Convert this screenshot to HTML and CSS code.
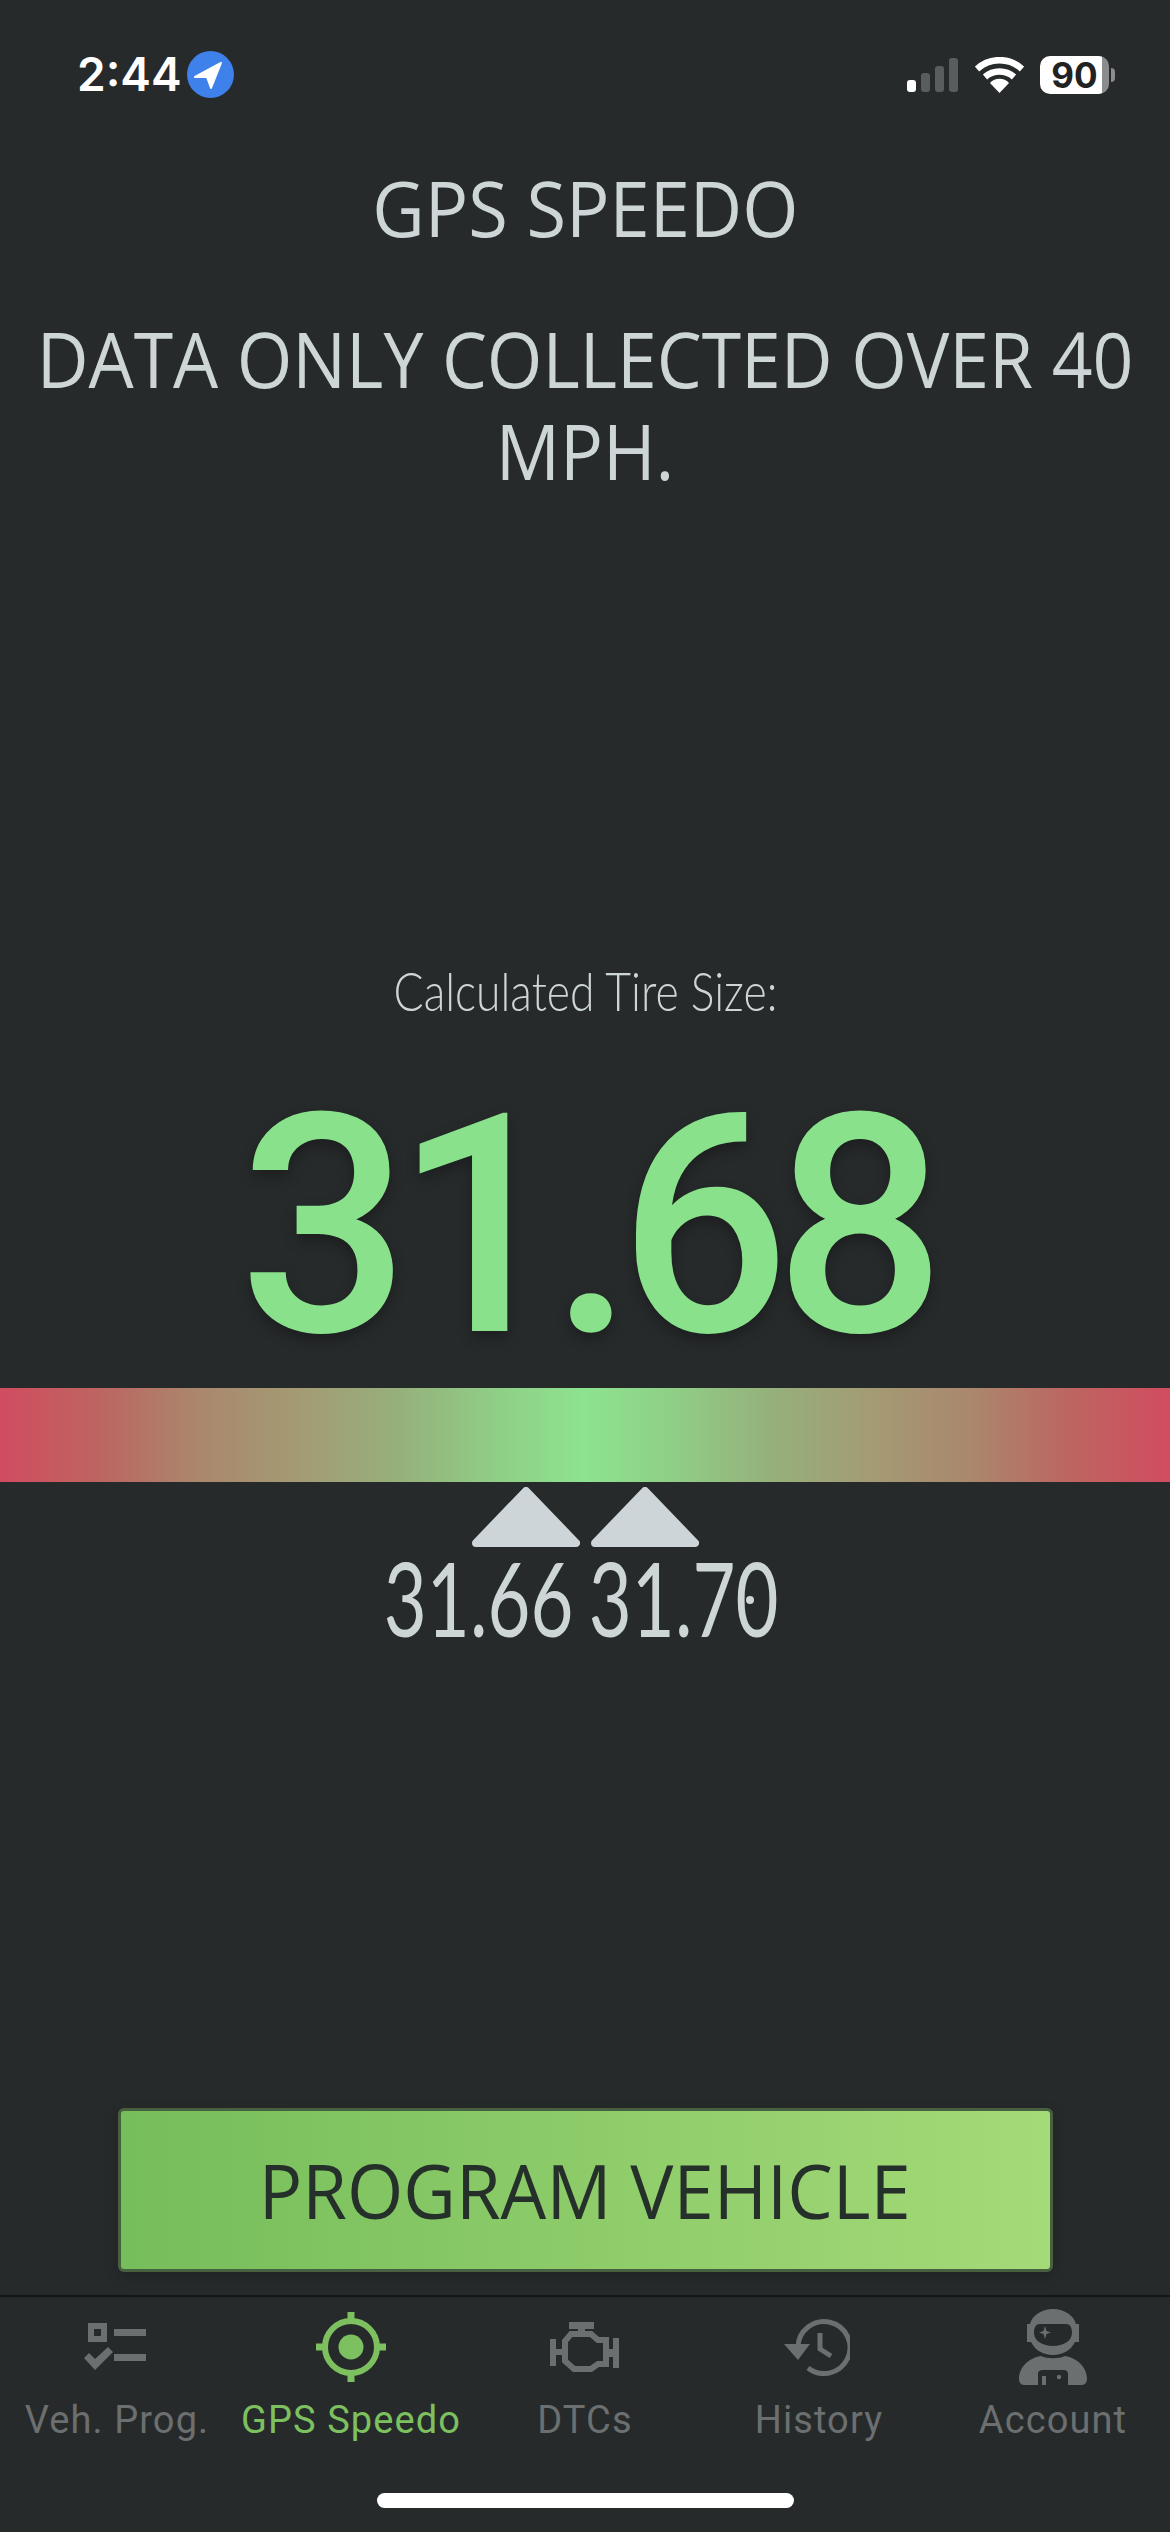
FILE: index.html
```html
<!DOCTYPE html>
<html lang="en">
<head>
    <meta charset="UTF-8">
    <meta name="viewport" content="width=device-width, initial-scale=1.0">
    <title>GPS Speedo</title>
    <link rel="stylesheet" href="styles.css">
</head>
<body>
    <div class="statusbar">
        <div class="status-left">
            <span class="clock">2:44</span>
            <svg class="locate" viewBox="0 0 47 47">
                <circle cx="23.5" cy="23.5" r="23.5" fill="#3f81ea"/>
                <path d="M34 12 L8 26 L20 26 L24 37 Z" fill="#fff" stroke="#fff" stroke-width="2" stroke-linejoin="round"/>
            </svg>
        </div>
        <div class="status-right">
            <div class="signal">
                <i class="on"></i><i></i><i></i><i></i>
            </div>
            <svg class="wifi" viewBox="0 0 49 36">
                <path d="M2 12 A33 33 0 0 1 47 12" fill="none" stroke="#fff" stroke-width="6.5"/>
                <path d="M10 20 A22 22 0 0 1 39 20" fill="none" stroke="#fff" stroke-width="6.5"/>
                <path d="M24.5 36 L15 26 A13 13 0 0 1 34 26 Z" fill="#fff"/>
            </svg>
            <div class="battery"><span>90</span></div>
        </div>
    </div>

    <div class="page">
        <h1 class="title">GPS SPEEDO</h1>
        <p class="notice">DATA ONLY COLLECTED OVER 40 MPH.</p>
        <p class="calc-label">Calculated Tire Size:</p>
        <div class="tire-size">31.68</div>
        <div class="range-bar"></div>
        <div class="arrows">
            <svg class="arrow" viewBox="0 0 108 60"><path d="M54 4 L104 56 H4 Z" fill="#cdd5d8" stroke="#cdd5d8" stroke-width="8" stroke-linejoin="round"/></svg>
            <svg class="arrow" viewBox="0 0 108 60"><path d="M54 4 L104 56 H4 Z" fill="#cdd5d8" stroke="#cdd5d8" stroke-width="8" stroke-linejoin="round"/></svg>
        </div>
        <div class="limits">
            <div class="limit"><span>31.66</span></div>
            <div class="limit dotted"><span>31.70</span></div>
        </div>
        <div class="spacer"></div>
        <button class="program-btn"><span>PROGRAM VEHICLE</span></button>
    </div>

    <nav class="tabbar">
        <div class="tab">
            <div class="tab-icon shift-left">
                <svg width="62" height="48" viewBox="0 0 62 48" fill="#6b6f70">
                    <path fill-rule="evenodd" d="M4 0 H23 V19 H4 Z M10 6 V13 H17 V6 Z"/>
                    <rect x="30" y="6" width="32" height="7"/>
                    <rect x="30" y="31" width="32" height="7"/>
                    <path d="M0 35 L5 30 L11 36 L24 24 L29 29 L11 47 Z"/>
                </svg>
            </div>
            <span>Veh. Prog.</span>
        </div>
        <div class="tab active">
            <div class="tab-icon">
                <svg width="70" height="70" viewBox="0 0 70 70" fill="#7cc05f">
                    <circle cx="35" cy="35" r="12.5"/>
                    <circle cx="35" cy="35" r="26" fill="none" stroke="#7cc05f" stroke-width="6"/>
                    <rect x="31.5" y="0" width="7" height="12"/>
                    <rect x="31.5" y="58" width="7" height="12"/>
                    <rect x="0" y="31.5" width="12" height="7"/>
                    <rect x="58" y="31.5" width="12" height="7"/>
                </svg>
            </div>
            <span>GPS Speedo</span>
        </div>
        <div class="tab">
            <div class="tab-icon">
                <svg width="70" height="50" viewBox="0 0 70 50" fill="#6b6f70">
                    <rect x="19" y="0" width="25" height="7"/>
                    <rect x="28" y="7" width="7" height="8"/>
                    <path d="M21 12 H41 L48 18 H56 V42 H48 L41 47 H24 L15 39 V19 Z" fill="none" stroke="#6b6f70" stroke-width="6"/>
                    <rect x="0" y="17" width="6" height="27"/>
                    <rect x="6" y="27" width="10" height="6"/>
                    <rect x="63" y="16" width="6" height="30"/>
                    <rect x="56" y="27" width="7" height="8"/>
                </svg>
            </div>
            <span>DTCs</span>
        </div>
        <div class="tab">
            <div class="tab-icon shift-left">
                <svg width="66" height="58" viewBox="0 0 66 58" fill="none" stroke="#6b6f70" stroke-width="5">
                    <path d="M14 29 A26 26 0 1 1 24 50"/>
                    <path d="M0 26 L14 42 L26 26 Z" fill="#6b6f70" stroke="none"/>
                    <path d="M36 15 V31 L47 38"/>
                </svg>
            </div>
            <span>History</span>
        </div>
        <div class="tab">
            <div class="tab-icon">
                <svg width="68" height="76" viewBox="0 0 68 76" fill="#6b6f70">
                    <path fill-rule="evenodd" d="M34 0 C46 0 55 7 57 15 H60 V33 H56 C52 41 44 46 34 46 C24 46 16 41 12 33 H8 V15 H11 C13 7 22 0 34 0 Z M21 15 C16 15 15 20 15 24 C15 32 24 37 34 37 C44 37 53 32 53 24 C53 20 52 15 47 15 Z"/>
                    <path d="M26 17 L27.5 22 L32 23.5 L27.5 25 L26 30 L24.5 25 L20 23.5 L24.5 22 Z"/>
                    <path fill-rule="evenodd" d="M22 47 C28 50 40 50 46 47 C58 49 68 58 68 70 C68 73 66 76 63 76 H49 V65 C49 62 47 61 45 61 H24 C21 61 19 62 19 65 V76 H5 C2 76 0 73 0 70 C0 58 10 49 22 47 Z"/>
                    <rect x="23" y="67" width="4" height="9"/>
                    <circle cx="40" cy="68" r="2.2"/>
                </svg>
            </div>
            <span>Account</span>
        </div>
    </nav>
    <div class="home-indicator"></div>
</body>
</html>
```

FILE: styles.css
```css
* {
    box-sizing: border-box;
}
html, body {
    margin: 0;
    height: 2532px;
    overflow: hidden;
}
body {
    background-color: #272a2b;
    color: #cdd5d6;
    font-family: "Open Sans", sans-serif;
    display: flex;
    flex-direction: column;
}

/* status bar */
.statusbar {
    height: 140px;
    flex: none;
    display: flex;
    justify-content: space-between;
    align-items: flex-start;
    padding: 51px 61px 0 77px;
}
.status-left {
    display: flex;
    align-items: center;
    gap: 9px;
}
.clock {
    width: 101px;
    font-family: Inter, sans-serif;
    font-weight: 600;
    font-size: 46px;
    line-height: 47px;
    color: #fff;
    white-space: nowrap;
}
.locate {
    width: 47px;
    height: 47px;
}
.status-right {
    display: flex;
    align-items: center;
    height: 47px;
}
.signal {
    display: flex;
    align-items: flex-end;
    gap: 5px;
    height: 34px;
    margin-right: 17px;
}
.signal i {
    width: 9px;
    border-radius: 3px;
    background-color: #5a5d5e;
}
.signal i:nth-child(1) { height: 12px; }
.signal i:nth-child(2) { height: 19px; }
.signal i:nth-child(3) { height: 26px; }
.signal i:nth-child(4) { height: 34px; }
.signal i.on {
    background-color: #fff;
}
.wifi {
    width: 49px;
    height: 36px;
    margin-right: 16px;
}
.battery {
    position: relative;
    width: 69px;
    height: 38px;
    border-radius: 10px;
    background: linear-gradient(90deg, #fff 90%, #8a8c8d 90%);
    color: #222;
    font-family: Inter, sans-serif;
    font-weight: 700;
    font-size: 35px;
    line-height: 38px;
    text-align: center;
}
.battery::after {
    content: "";
    position: absolute;
    right: -6px;
    top: 12px;
    width: 4px;
    height: 14px;
    border-radius: 0 4px 4px 0;
    background-color: #8a8c8d;
}

/* main column */
.page {
    flex: 1;
    display: flex;
    flex-direction: column;
    align-items: center;
    text-align: center;
}
.title {
    margin: 23px 0 0;
    font-weight: 400;
    font-size: 76px;
    line-height: 90px;
    transform: scaleX(0.95);
}
.notice {
    margin: 60px 0 0;
    width: 1170px;
    font-size: 76px;
    line-height: 92px;
    transform: scaleX(0.94);
}
.calc-label {
    margin: 464px 0 0;
    font-family: "Lato", sans-serif;
    font-weight: 300;
    font-size: 53px;
    line-height: 60px;
    transform: scaleX(0.84);
}
.tire-size {
    margin-top: 61px;
    margin-bottom: 16px;
    height: 290px;
    font-family: Roboto, sans-serif;
    font-weight: 500;
    font-size: 306px;
    line-height: 290px;
    letter-spacing: -15px;
    color: #89e28b;
    text-shadow: 0 6px 14px rgba(0, 0, 0, 0.3);
    transform: scaleX(0.98);
}
.range-bar {
    width: 100%;
    height: 94px;
    flex: none;
    background: linear-gradient(90deg, #d14c60 0%, #bd6561 8.5%, #aa876d 17%, #a39c74 26%, #96b07b 34%, #8fd087 43%, #8de38f 50%, #8fd087 57%, #96b07b 66%, #a39c74 74%, #aa876d 83%, #bd6561 91.5%, #d14c60 100%);
}
.arrows {
    display: flex;
    gap: 11px;
    margin-top: 5px;
}
.arrow {
    width: 108px;
    height: 60px;
    display: block;
}
.limits {
    display: flex;
    gap: 18px;
    margin-right: 8px;
}
.limit {
    position: relative;
    width: 187px;
    display: flex;
    justify-content: center;
}
.limit span {
    font-family: "Lato", sans-serif;
    font-size: 103px;
    line-height: 100px;
    white-space: nowrap;
    transform: scaleX(0.72);
}
.limit.dotted::after {
    content: "";
    position: absolute;
    left: 156px;
    top: 49px;
    width: 8px;
    height: 8px;
    border-radius: 50%;
    background-color: #cdd5d6;
}
.spacer {
    flex: 1;
}
.program-btn {
    width: 935px;
    height: 164px;
    margin-bottom: 23px;
    border: 3px solid #47603f;
    border-radius: 6px;
    background: linear-gradient(90deg, #76bd5b, #a5da78);
    color: #26302a;
    font-family: "Open Sans", sans-serif;
    font-size: 75px;
    box-shadow: 0 4px 14px rgba(0, 0, 0, 0.2);
}
.program-btn span {
    display: inline-block;
    white-space: nowrap;
    transform: scaleX(0.965);
}

/* bottom tabs */
.tabbar {
    flex: none;
    height: 237px;
    border-top: 2px solid #141516;
    display: grid;
    grid-template-columns: repeat(5, 1fr);
    padding-top: 11px;
    font-family: Roboto, sans-serif;
    font-size: 38px;
    letter-spacing: 1.1px;
    color: #6b6f70;
}
.tab {
    display: flex;
    flex-direction: column;
    align-items: center;
}
.tab-icon {
    height: 78px;
    display: flex;
    align-items: center;
    justify-content: center;
    margin-bottom: 12px;
}
.tab-icon.shift-left {
    margin-right: 4px;
}
.tab.active {
    color: #7cc05f;
}
.home-indicator {
    position: absolute;
    left: 377px;
    top: 2493px;
    width: 417px;
    height: 15px;
    border-radius: 8px;
    background-color: #fff;
}
```
